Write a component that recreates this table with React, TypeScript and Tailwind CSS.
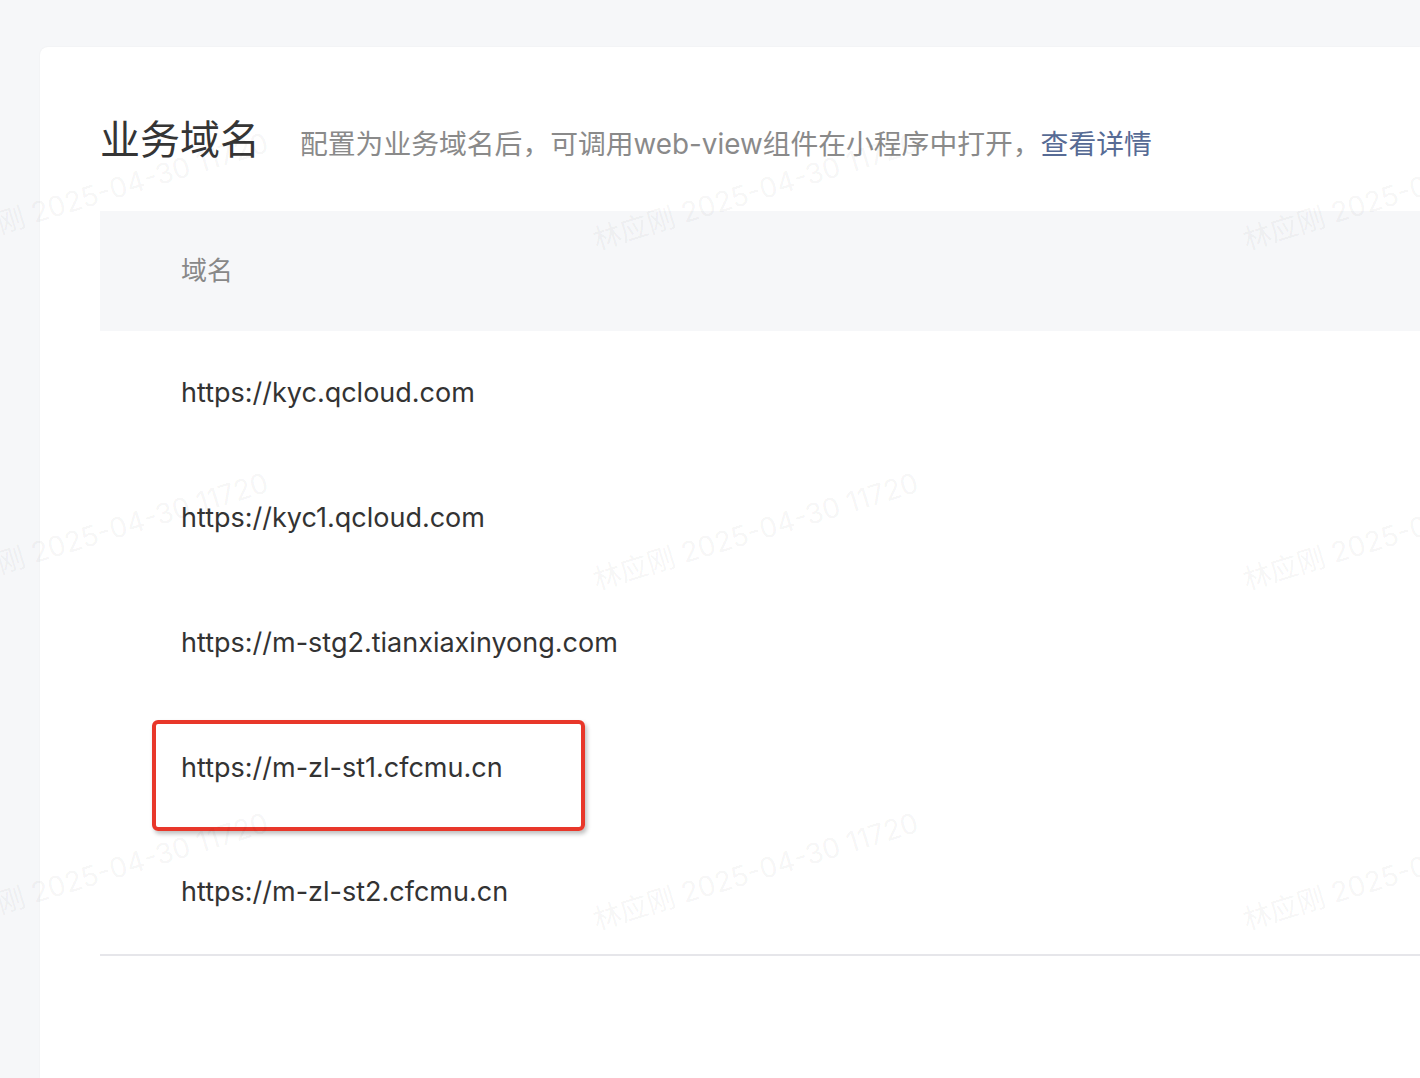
const domains = [
  "https://kyc.qcloud.com",
  "https://kyc1.qcloud.com",
  "https://m-stg2.tianxiaxinyong.com",
  "https://m-zl-st1.cfcmu.cn",
  "https://m-zl-st2.cfcmu.cn",
]

const marks = [
  { x: -52, y: 254 }, { x: 598, y: 254 }, { x: 1248, y: 254 },
  { x: -52, y: 594 }, { x: 598, y: 594 }, { x: 1248, y: 594 },
  { x: -52, y: 934 }, { x: 598, y: 934 }, { x: 1248, y: 934 },
]

export default function App() {
  return (
    <div
      className="relative h-[1078px] w-[1420px] overflow-hidden bg-[#f6f7f9] pl-[40px] pt-[47px]"
      style={{ fontFamily: 'Inter, "Noto Sans CJK SC", sans-serif' }}
    >
      {/* card */}
      <div className="h-full rounded-tl-[8px] bg-white pl-[60px] pt-[68px] shadow-[0_0_2px_rgba(0,0,0,0.06)]">

        {/* title */}
        <div className="flex items-baseline">
          <h1 className="text-[40px] leading-[50px] text-[#353535]">业务域名</h1>
          <p className="ml-[40px] text-[27.8px] text-[#8a8a8a]">
            配置为业务域名后，可调用web-view组件在小程序中打开，
            <span className="text-[#576b95]">查看详情</span>
          </p>
        </div>

        {/* table */}
        <div className="mt-[45px]">
          <div className="flex h-[120px] items-center bg-[#f6f7f9] pl-[81px] text-[26px] text-[#888888]">
            域名
          </div>
          {domains.map((d, i) => (
            <div
              key={d}
              className={`relative flex h-[125px] items-center pl-[81px] text-[27px] text-[#333333] ${
                i === domains.length - 1 ? "border-b-2 border-[#e6e6ea]" : ""
              }`}
            >
              {d}
              {i === 3 && (
                <div className="absolute left-[52px] top-[14px] h-[111px] w-[433px] rounded-[6px] border-[4px] border-[#e8372a] shadow-[2px_3px_4px_rgba(0,0,0,0.25)]" />
              )}
            </div>
          ))}
        </div>
      </div>

      {/* watermark */}
      <div className="pointer-events-none absolute inset-0">
        {marks.map((m, i) => (
          <span
            key={i}
            className="absolute origin-bottom-left -rotate-[17deg] whitespace-nowrap text-[28px] leading-[28px] text-black/[0.05]"
            style={{ left: m.x, top: m.y - 28 }}
          >
            林应刚 2025-04-30 11720
          </span>
        ))}
      </div>
    </div>
  )
}
